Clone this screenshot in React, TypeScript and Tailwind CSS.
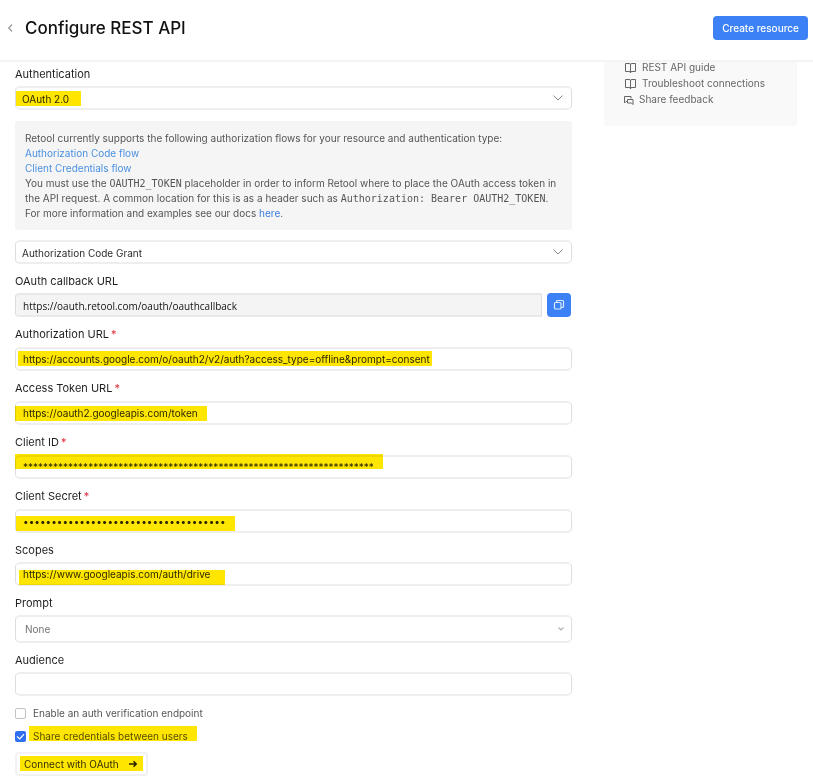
import type { ReactNode } from "react";

const frame = "rounded-[5px] border-x border-y-2 border-x-[#dedede] border-y-[#eeeeee] bg-white outline-none";
const control = `block h-6 w-full text-[10px] text-[#2b2b2b] ${frame}`;

function Label({ htmlFor, required, children }: { htmlFor: string; required?: boolean; children: ReactNode }) {
  return (
    <label
      htmlFor={htmlFor}
      className={`flex items-center gap-[2px] pt-[5px] text-[11px] text-[#1f1f1f] ${required ? "h-[30px]" : "h-[29px]"}`}
    >
      {children}
      {required && <span className="text-[#e02d3c]">*</span>}
    </label>
  );
}

function Mark({ className }: { className: string }) {
  return <span aria-hidden="true" className={`pointer-events-none absolute bg-[#ffe600] mix-blend-multiply ${className}`} />;
}

function Chevron() {
  return (
    <svg viewBox="0 0 12 12" className="pointer-events-none absolute top-[6px] right-2 size-3" fill="none" stroke="#8c8c8c" strokeWidth="1">
      <path d="M1.500 3.500 6 8l4.500-4.500" />
    </svg>
  );
}

function Book() {
  return (
    <svg viewBox="0 0 13 12" className="h-3 w-[13px]" fill="none" stroke="#666666" strokeWidth="1">
      <path d="M1.500 1.500H5q1.500 0 1.500 1.200Q6.500 1.500 8 1.500h3.500v8H8q-1.500 0-1.500 1.200Q6.500 9.500 5 9.500H1.500zM6.500 2.500v8.500" />
    </svg>
  );
}

function Code({ children }: { children: ReactNode }) {
  return <code className="font-['DejaVu_Sans_Mono',monospace] text-[10px] leading-none">{children}</code>;
}

export default function App() {
  return (
    <div className="bg-white font-['Inter','Liberation_Sans',sans-serif] text-[10px] text-[#555555]">
      <header className="flex h-[62px] items-center justify-between border-b-2 border-[#f4f4f4] pr-[5px] pb-1 pl-[7px]">
        <div className="flex items-center gap-[11px]">
          <button type="button" aria-label="Back" className="w-[7px]">
            <svg viewBox="0 0 7 10" className="h-[10px] w-[7px]" fill="none" stroke="#a3a3a3" strokeWidth="1.500">
              <path d="M5 1.500 1.800 5 5 8.500" />
            </svg>
          </button>
          <h1 className="pt-px text-[17px] font-medium text-[#111111]">Configure REST API</h1>
        </div>
        <button type="button" className="h-6 rounded-[4px] bg-[#3c82f6] px-[9px] font-medium text-white">
          Create resource
        </button>
      </header>

      <div className="flex items-start gap-8 pr-4 pl-[15px]">
        <form className="min-w-0 flex-1">
          <label htmlFor="auth" className="flex h-6 items-center text-[11px] text-[#1f1f1f]">Authentication</label>
          <div className="relative">
            <select id="auth" className={`${control} appearance-none pt-[3px] pl-[6px]`}>
              <option>OAuth 2.0</option>
            </select>
            <Chevron />
            <Mark className="top-[5px] left-px h-[15px] w-[65px]" />
          </div>

          <div className="mt-[11px] rounded-[3px] bg-[#f5f5f5] px-[10px] pt-[10px] pb-[9px] leading-[15px]">
            <p>Retool currently supports the following authorization flows for your resource and authentication type:</p>
            <p><a href="#code" className="text-[#4a90e2]">Authorization Code flow</a></p>
            <p><a href="#client" className="text-[#4a90e2]">Client Credentials flow</a></p>
            <p>
              You must use the <Code>OAUTH2_TOKEN</Code> placeholder in order to inform Retool where to place the OAuth access token in the API request. A common location for this is as a header such as <Code>Authorization: Bearer OAUTH2_TOKEN</Code>.
            </p>
            <p>For more information and examples see our docs <a href="#docs" className="text-[#3c7be0]">here</a>.</p>
          </div>

          <div className="relative mt-[10px]">
            <select aria-label="Authorization flow" className={`${control} appearance-none pt-[3px] pl-[6px]`}>
              <option>Authorization Code Grant</option>
            </select>
            <Chevron />
          </div>

          <Label htmlFor="callback">OAuth callback URL</Label>
          <div className="flex gap-[5px] pr-px">
            <input id="callback" readOnly defaultValue="https://oauth.retool.com/oauth/oauthcallback" className="block h-6 min-w-0 flex-1 rounded-l-[4px] border-x border-y-2 border-x-[#dedede] border-y-[#e9e9e9] bg-[#f4f4f4] px-[7px] pt-px font-['Open_Sans','Noto_Sans',sans-serif] text-[#111111] outline-none" />
            <button type="button" aria-label="Copy callback URL" className="flex size-6 items-center justify-center rounded-[4px] bg-[#3c82f6]">
              <svg viewBox="0 0 12 12" className="size-3" fill="none" stroke="#dbe8ff" strokeWidth="1.200">
                <rect x="1.500" y="3.500" width="6.500" height="6.500" rx="1" />
                <path d="M3.500 3.500V2.500q0-1 1-1h5q1 0 1 1v5q0 1-1 1H8" />
              </svg>
            </button>
          </div>

          <Label htmlFor="authurl" required>Authorization URL</Label>
          <div className="relative">
            <input id="authurl" defaultValue="https://accounts.google.com/o/oauth2/v2/auth?access_type=offline&prompt=consent" className={`${control} px-[7px]`} />
            <Mark className="top-1 left-[3px] h-[15px] w-[414px]" />
          </div>

          <Label htmlFor="tokenurl" required>Access Token URL</Label>
          <div className="relative">
            <input id="tokenurl" defaultValue="https://oauth2.googleapis.com/token" className={`${control} px-[7px]`} />
            <Mark className="top-[5px] left-0 h-[15px] w-[192px]" />
          </div>

          <Label htmlFor="clientid" required>Client ID</Label>
          <div className="relative">
            <input id="clientid" defaultValue={"*".repeat(70)} className={`${control} px-[7px]`} />
            <Mark className="top-[-1px] left-0 h-[15px] w-[368px]" />
          </div>

          <Label htmlFor="secret" required>Client Secret</Label>
          <div className="relative">
            <input id="secret" type="password" defaultValue={"x".repeat(36)} className={`${control} px-[7px]`} />
            <Mark className="top-[7px] left-px h-[15px] w-[219px]" />
          </div>

          <Label htmlFor="scopes">Scopes</Label>
          <div className="relative">
            <input id="scopes" defaultValue="https://www.googleapis.com/auth/drive" className={`${control} px-[7px]`} />
            <Mark className="top-2 left-1 h-[15px] w-[206px]" />
          </div>

          <Label htmlFor="prompt">Prompt</Label>
          <div className="relative">
            <select id="prompt" className={`block h-7 w-full appearance-none px-[9px] text-[10px] text-[#737373] ${frame}`}>
              <option>None</option>
            </select>
            <svg viewBox="0 0 6 4" className="pointer-events-none absolute top-3 right-2 h-1 w-[6px]" fill="none" stroke="#b0b0b0" strokeWidth="1.200">
              <path d="M.5.5 3 3 5.500.5" />
            </svg>
          </div>

          <Label htmlFor="audience">Audience</Label>
          <input id="audience" className={`${control} px-[7px]`} />

          <label className="mt-[9px] flex h-[17px] items-center gap-[7px]">
            <input type="checkbox" className="size-[11px] appearance-none rounded-[2px] border border-[#c4c4c4]" />
            Enable an auth verification endpoint
          </label>
          <div className="relative mt-[6px]">
            <label className="flex h-[17px] items-center gap-[7px]">
              <span className="relative block size-[11px]">
                <input type="checkbox" defaultChecked className="block size-[11px] appearance-none rounded-[2px] bg-[#2f6ff0]" />
                <svg viewBox="0 0 11 11" className="pointer-events-none absolute inset-0 size-[11px]" fill="none" stroke="white" strokeWidth="1.200">
                  <path d="M2 5.500 4.800 8 9 3.200" />
                </svg>
              </span>
              Share credentials between users
            </label>
            <Mark className="top-[-2px] left-[14px] h-[15px] w-[168px]" />
          </div>
          <button type="button" className="relative mt-[7px] flex h-6 items-center gap-[9px] rounded-[4px] border-2 border-[#f2f2f2] pr-2 pl-[7px] text-[#333333]">
            Connect with OAuth
            <svg viewBox="0 0 10 8" className="h-2 w-[10px]" fill="none" stroke="#222222" strokeWidth="1.400">
              <path d="M1 4h7M5.500 1.200 8.300 4 5.500 6.800" />
            </svg>
            <Mark className="top-[2px] left-[3px] h-[15px] w-[123px]" />
          </button>
        </form>

        <aside className="flex w-[193px] flex-col gap-[5px] rounded-b-[4px] bg-[#f9f9f9] pb-[21px] pl-5 leading-[11px] text-[#666666]">
          <a href="#guide" className="flex h-[11px] items-center gap-[5px]"><Book />REST API guide</a>
          <a href="#troubleshoot" className="flex h-[11px] items-center gap-[5px]"><Book />Troubleshoot connections</a>
          <a href="#feedback" className="flex h-[11px] items-center gap-[5px]">
            <svg viewBox="0 0 10 10" className="size-[10px]" fill="none" stroke="#666666" strokeWidth="1">
              <path d="M3 6.500H2L.5 8V1.500h6.500v2M3.500 4.500h5.500v5L7.500 8h-4z" />
            </svg>
            Share feedback
          </a>
        </aside>
      </div>
    </div>
  );
}
